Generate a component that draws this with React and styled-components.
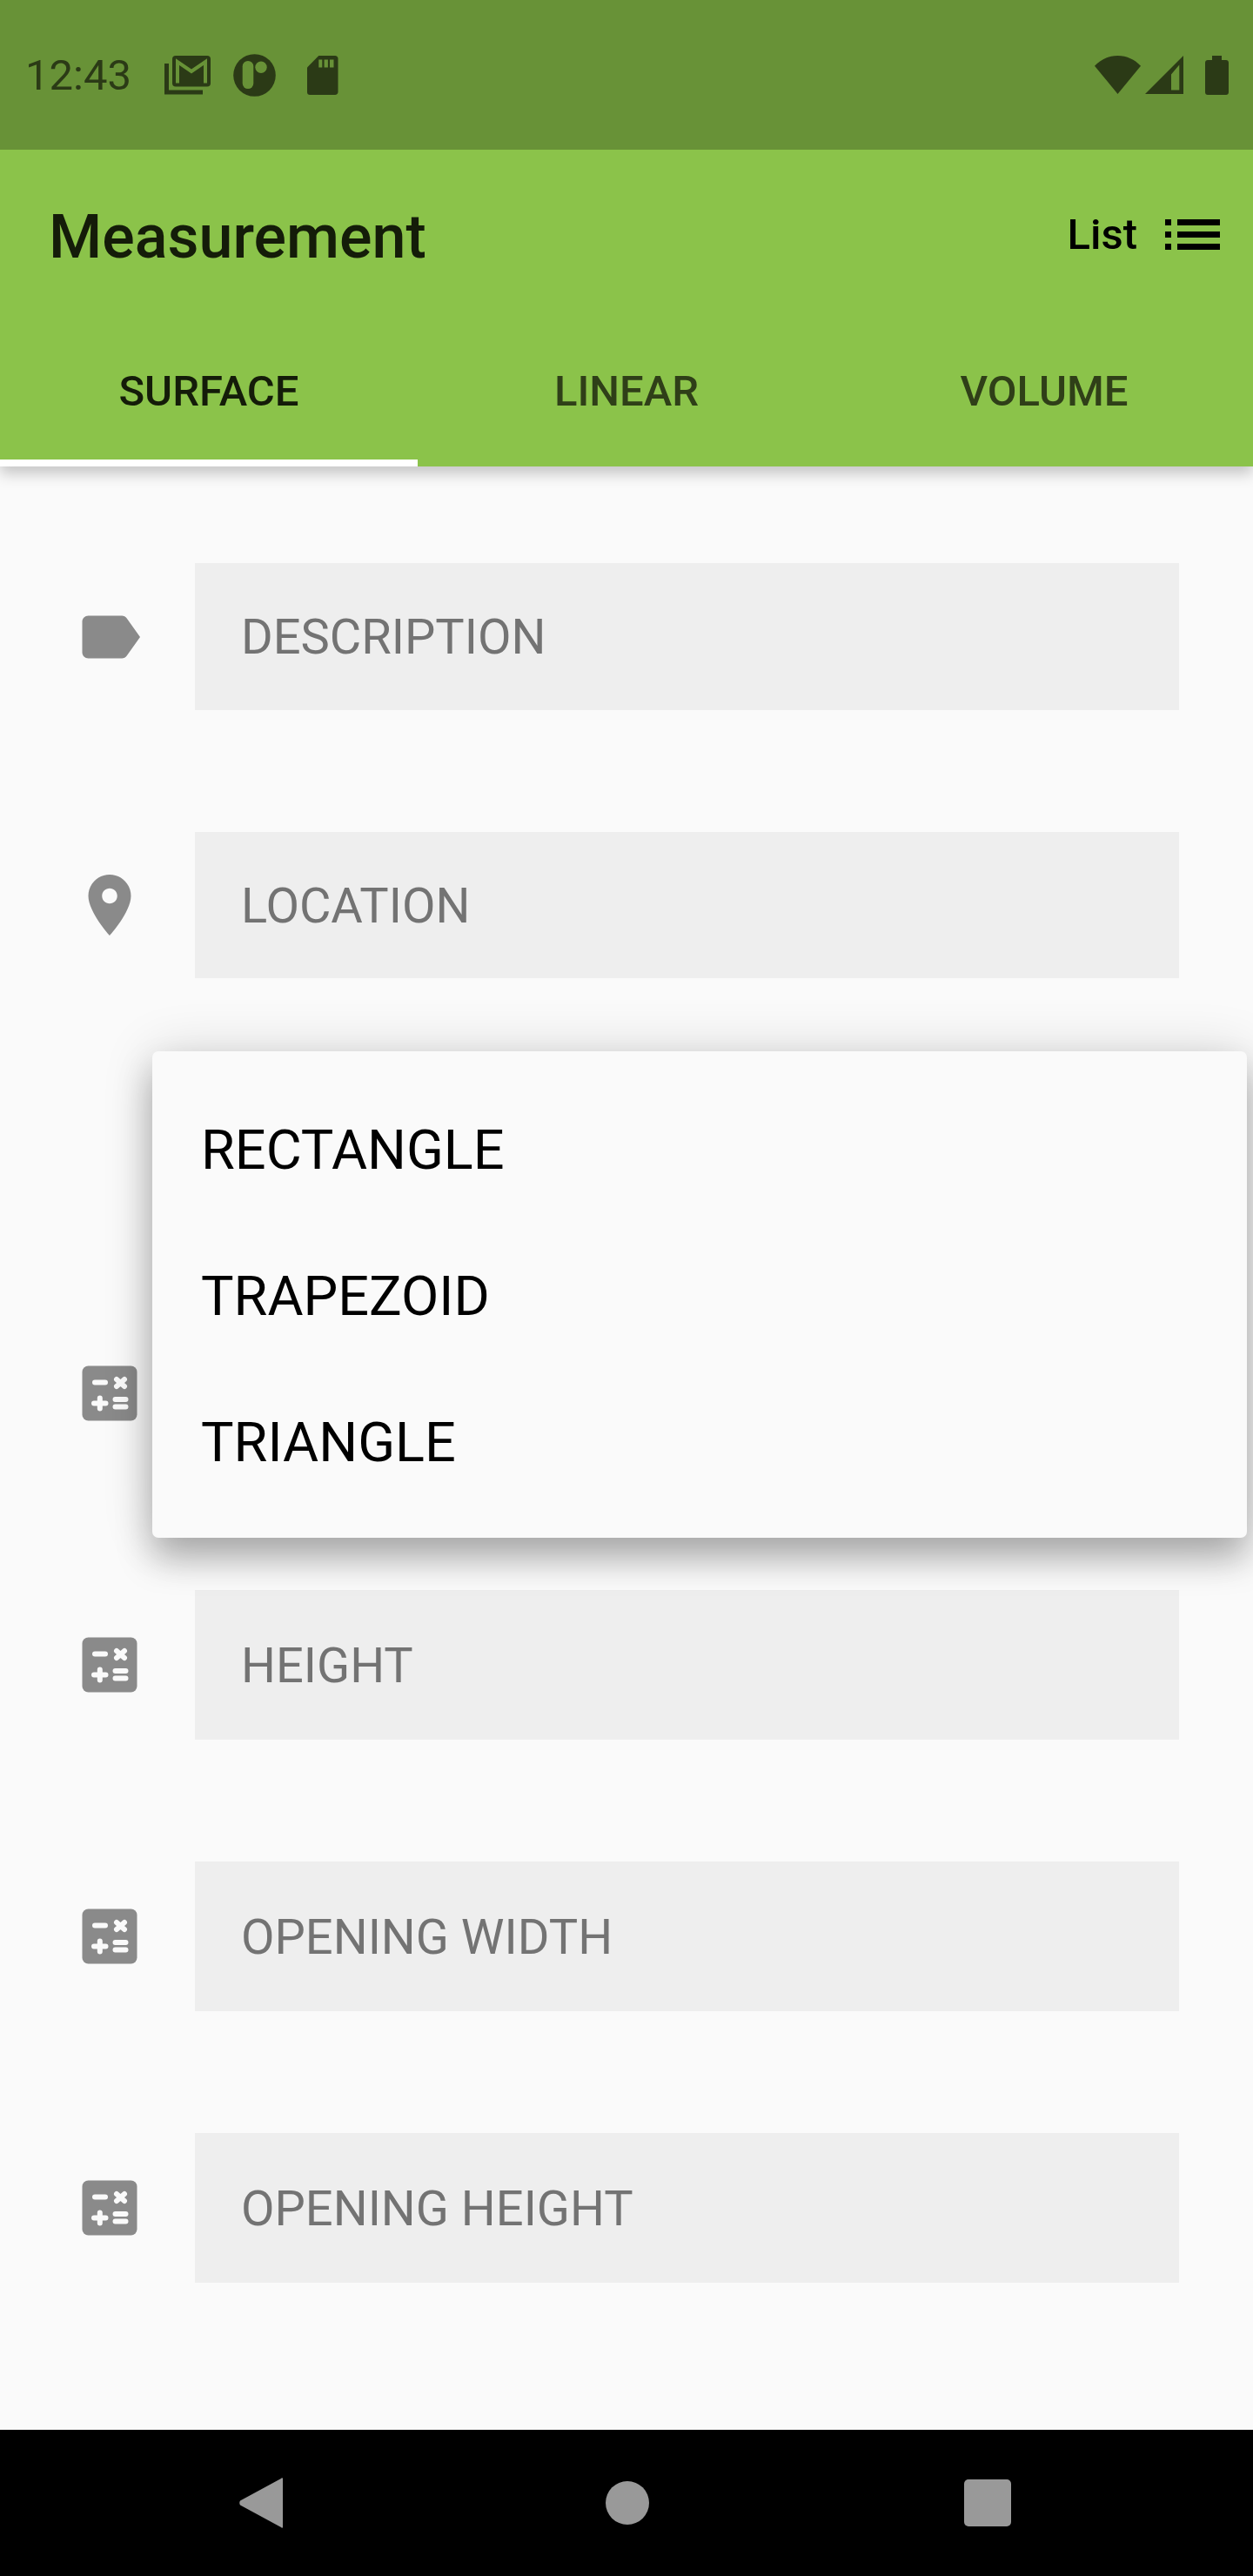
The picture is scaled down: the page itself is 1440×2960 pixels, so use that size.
import React from "react";
import styled, { createGlobalStyle } from "styled-components";

const GlobalStyle = createGlobalStyle`
  * {
    box-sizing: border-box;
  }
  html, body {
    margin: 0;
    padding: 0;
    background: #fafafa;
    font-family: Roboto, "Noto Sans", sans-serif;
  }
`;

const STATUS_INK = "#2b3a16";
const STATUS_BG = "#689237";

const MailIcon = () => (
  <svg width="53" height="45" viewBox="0 0 53 45">
    <path d="M2.5 9v33h41.5" fill="none" stroke={STATUS_INK} strokeWidth="5" />
    <rect x="9" y="0" width="44" height="35.5" rx="4" fill={STATUS_INK} />
    <path d="M15 31.5V7l16 11L47 7v24.5" fill="none" stroke={STATUS_BG} strokeWidth="4" />
  </svg>
);

const PillIcon = () => (
  <svg width="49" height="49" viewBox="0 0 49 49">
    <circle cx="24.5" cy="24.5" r="24.3" fill={STATUS_INK} />
    <rect x="10.7" y="8" width="12.6" height="32" rx="6.3" fill={STATUS_BG} />
    <circle cx="32" cy="15.3" r="6.7" fill={STATUS_BG} />
  </svg>
);

const SdIcon = () => (
  <svg width="36" height="45" viewBox="0 0 36 45">
    <path d="M3 45c-1.7 0-3-1.3-3-3V13.500L13.300 0H32c2 0 3.500 1.500 3.500 3.500V41.500c0 2-1.500 3.500-3.500 3.500z" fill={STATUS_INK} />
    <path d="M13.300 4.500h4v9h-4zM19.600 4.500h4.300v9h-4.300zM26 4.500h4.500v9H26z" fill={STATUS_BG} />
  </svg>
);

const WifiIcon = () => (
  <svg width="53" height="44" viewBox="0 0 53 44">
    <path d="M26.500 44L0 11.700C7 4.500 16 0 26.500 0S46 4.500 53 11.700z" fill={STATUS_INK} />
  </svg>
);

const SignalIcon = () => (
  <svg width="44" height="44" viewBox="0 0 44 44">
    <path
      fillRule="evenodd"
      d="M44 0V44H0zM39.300 10.500L30 21.500V39.500H39.300z"
      fill={STATUS_INK}
    />
  </svg>
);

const BatteryIcon = () => (
  <svg width="27" height="45" viewBox="0 0 27 45">
    <path d="M8 0h11v5h5c1.700 0 3 1.300 3 3v34c0 1.700-1.300 3-3 3H3c-1.700 0-3-1.300-3-3V8c0-1.700 1.300-3 3-3h5z" fill={STATUS_INK} />
  </svg>
);

const ListIcon = () => (
  <svg width="63" height="35" viewBox="0 0 63 35">
    <path d="M0 0h7v7H0zM0 14h7v7H0zM0 28h7v7H0zM14 0h49v7H14zM14 14h49v7H14zM14 28h49v7H14z" fill="#000" />
  </svg>
);

const LabelIcon = () => (
  <FieldGlyph viewBox="0 0 24 24">
    <path d="M17.630 5.840C17.270 5.330 16.670 5 16 5L5 5.010C3.900 5.010 3 5.900 3 7v10c0 1.100.9 1.990 2 1.990L16 19c.67 0 1.270-.33 1.630-.84L22 12l-4.370-6.160z" />
  </FieldGlyph>
);

const PlaceIcon = () => (
  <FieldGlyph viewBox="0 0 24 24">
    <path d="M12 2C8.130 2 5 5.130 5 9c0 5.250 7 13 7 13s7-7.750 7-13c0-3.870-3.130-7-7-7zm0 9.500c-1.380 0-2.500-1.120-2.500-2.500s1.120-2.500 2.500-2.500 2.500 1.120 2.500 2.500-1.120 2.500-2.500 2.500z" />
  </FieldGlyph>
);

const CalcIcon = () => (
  <FieldGlyph viewBox="-10.500 -10.500 84 84">
    <rect x="0" y="0" width="63" height="63" rx="7" />
    <g stroke="#fafafa" strokeWidth="6" strokeLinecap="round" fill="none">
      <path d="M14.500 19H26.500" />
      <path d="M39.500 15.500L48.500 23.500M48.500 15.500L39.500 23.500" />
      <path d="M13.500 43H27M20.300 37V49" />
      <path d="M38 38.500H50M38 47H50" />
    </g>
  </FieldGlyph>
);

const App = () => {
  return (
    <Page>
      <GlobalStyle />
      <Header>
        <StatusBar>
          <StatusGroup>
            <Clock>12:43</Clock>
            <MailIcon />
            <PillIcon />
            <SdIcon />
          </StatusGroup>
          <StatusRight>
            <WifiIcon />
            <SignalIcon />
            <BatterySlot>
              <BatteryIcon />
            </BatterySlot>
          </StatusRight>
        </StatusBar>
        <Toolbar>
          <Title>Measurement</Title>
          <ListAction>
            <span>List</span>
            <ListIcon />
          </ListAction>
        </Toolbar>
        <Tabs>
          <Tab $active>SURFACE</Tab>
          <Tab>LINEAR</Tab>
          <Tab>VOLUME</Tab>
        </Tabs>
      </Header>

      <Form>
        <Row>
          <LabelIcon />
          <Field $height={169}>DESCRIPTION</Field>
        </Row>
        <Row>
          <PlaceIcon />
          <Field $height={168}>LOCATION</Field>
        </Row>
        <HiddenRow />
        <Row>
          <CalcIcon />
          <Field />
        </Row>
        <Row>
          <CalcIcon />
          <Field>HEIGHT</Field>
        </Row>
        <Row>
          <CalcIcon />
          <Field>OPENING WIDTH</Field>
        </Row>
        <Row>
          <CalcIcon />
          <Field>OPENING HEIGHT</Field>
        </Row>
      </Form>

      <Menu>
        <MenuItem>RECTANGLE</MenuItem>
        <MenuItem>TRAPEZOID</MenuItem>
        <MenuItem>TRIANGLE</MenuItem>
      </Menu>

      <NavBar>
        <svg width="84" height="84" viewBox="0 0 84 84">
          <path d="M67 14.500v55c0 1.500-1.200 1.800-2 .6L18 44.500c-1-1.500-1-3.500 0-5L65 13.900c.8-1.200 2-.9 2 .6z" fill="#999" />
        </svg>
        <svg width="84" height="84" viewBox="0 0 84 84">
          <circle cx="45" cy="42" r="25" fill="#999" />
        </svg>
        <svg width="84" height="84" viewBox="0 0 84 84">
          <rect x="15" y="15" width="54" height="54" rx="5" fill="#999" />
        </svg>
      </NavBar>
    </Page>
  );
};

const Page = styled.div`
  position: relative;
  width: 1440px;
  height: 2960px;
  display: flex;
  flex-direction: column;
  overflow: hidden;
  background: #fafafa;
`;

const Header = styled.header`
  position: relative;
  z-index: 1;
  box-shadow: 0 8px 16px rgba(0, 0, 0, 0.22);
`;

const StatusBar = styled.div`
  height: 172px;
  padding: 0 28px 0 29px;
  display: flex;
  align-items: center;
  justify-content: space-between;
  background: ${STATUS_BG};
`;

const StatusGroup = styled.div`
  display: flex;
  align-items: center;
  gap: 26px;
  svg:first-of-type {
    margin-left: 12px;
  }
  svg:last-of-type {
    margin-left: 10px;
  }
`;

const StatusRight = styled.div`
  display: flex;
  align-items: center;
  gap: 5px;
`;

const BatterySlot = styled.div`
  display: flex;
  margin-left: 20px;
`;

const Clock = styled.span`
  font-size: 49px;
  color: ${STATUS_INK};
`;

const Toolbar = styled.div`
  height: 196px;
  padding: 3px 38px 0 56px;
  display: flex;
  align-items: center;
  justify-content: space-between;
  background: #8bc34a;
`;

const Title = styled.h1`
  margin: 0;
  font-size: 70px;
  font-weight: 500;
  color: #141c09;
`;

const ListAction = styled.div`
  display: flex;
  align-items: center;
  gap: 32px;
  margin-top: -5px;
  font-size: 49px;
  font-weight: 500;
  color: #000;
`;

const Tabs = styled.div`
  height: 168px;
  display: flex;
  background: #8bc34a;
`;

const Tab = styled.div`
  width: 480px;
  padding-top: 2px;
  display: flex;
  align-items: center;
  justify-content: center;
  font-size: 49px;
  font-weight: 500;
  color: ${(props) => (props.$active ? "#141c09" : "#2f3f18")};
  border-bottom: 8px solid ${(props) => (props.$active ? "#fff" : "transparent")};
`;

const Form = styled.main`
  flex: 1;
  padding: 111px 85px 0 84px;
  display: flex;
  flex-direction: column;
  gap: 140px;
`;

const Row = styled.div`
  display: flex;
  align-items: center;
  gap: 56px;
`;

const HiddenRow = styled.div`
  height: 111px;
`;

const FieldGlyph = styled.svg`
  width: 84px;
  height: 84px;
  flex: none;
  fill: #8a8a8a;
`;

const Field = styled.div`
  flex: 1;
  height: ${(props) => props.$height || 172}px;
  padding: 1px 53px 0;
  display: flex;
  align-items: center;
  background: #eeeeee;
  font-size: 56px;
  color: #737373;
`;

const Menu = styled.div`
  position: absolute;
  z-index: 2;
  top: 1208px;
  left: 175px;
  width: 1258px;
  height: 559px;
  padding: 29px 0 0;
  border-radius: 7px;
  background: #fafafa;
  box-shadow: 0 24px 40px rgba(0, 0, 0, 0.28), 0 0 60px rgba(0, 0, 0, 0.14);
`;

const MenuItem = styled.div`
  height: 168px;
  padding: 0 56px;
  display: flex;
  align-items: center;
  font-size: 63px;
  color: #000;
`;

const NavBar = styled.nav`
  height: 168px;
  padding: 0 263px 0 258px;
  display: flex;
  align-items: center;
  justify-content: space-between;
  background: #000;
`;

export default App;
